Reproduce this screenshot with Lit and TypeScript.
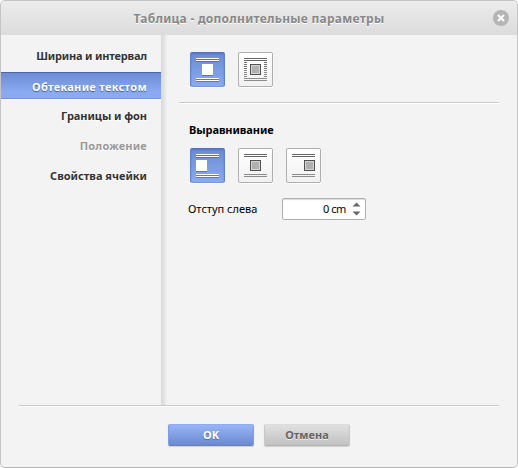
import { LitElement, html, svg, css } from "lit";
import { customElement, property } from "lit/decorators.js";
import { classMap } from "lit/directives/class-map.js";

type Wrap = "left" | "center" | "right" | "around";

@customElement("wrap-button")
class WrapButton extends LitElement {
  @property() kind: Wrap = "center";
  @property({ type: Boolean, reflect: true }) active = false;

  static styles = css`
    :host {
      display: block;
      box-sizing: border-box;
      width: 35px;
      height: 35px;
      border: 1px solid #afafaf;
      border-radius: 2px;
      background: linear-gradient(#fff, #f1f1f1);
      box-shadow: 0 1px 0 #fff;
    }
    :host([active]) {
      border-color: #5472b6 #6482cb #7896e0;
      background: linear-gradient(#6c8bd2, #8aabf1);
      box-shadow: inset 0 1px 2px rgba(50, 75, 140, 0.35), 0 1px 0 #fff;
    }
    svg {
      display: block;
      margin: -1px;
    }
    :host([active]) svg {
      filter: drop-shadow(0 1px 0.5px rgba(50, 75, 140, 0.5));
    }
  `;

  render() {
    const x = this.kind === "left" ? 6 : this.kind === "right" ? 18 : 12;
    const top = this.active ? "#fff" : "#666";
    const low = this.active ? "#fff" : "#8c8c8c";
    return html`<svg width="35" height="35" viewBox="0 0 35 35" shape-rendering="crispEdges">
      <path d="M6 6.5h23M6 8.5h23" stroke=${top} />
      <path d="M6 26.5h23M6 28.5h23" stroke=${low} />
      ${this.kind === "around"
        ? [10, 12, 14, 16, 18, 20, 22, 24].map(
            (y) => svg`<path d="M6 ${y + 0.5}h3M26 ${y + 0.5}h3" stroke=${y < 18 ? "#707070" : "#888"} />`
          )
        : ""}
      ${this.active
        ? svg`<rect x=${x} y="12" width="11" height="11" fill="#fff" />`
        : svg`<rect x=${x} y="12" width="11" height="11" fill="#505050" />
            <rect x=${x + 1} y="13" width="9" height="9" fill="#d4d4d4" />
            <rect x=${x + 2} y="14" width="7" height="7" fill="#b0b0b0" />`}
    </svg>`;
  }
}

const TABS = [
  { label: "Ширина и интервал", cls: "t1" },
  { label: "Обтекание текстом", cls: "t2", active: true },
  { label: "Границы и фон", cls: "t3" },
  { label: "Положение", cls: "t4", disabled: true },
  { label: "Свойства ячейки", cls: "t5" },
];

@customElement("app-root")
class AppRoot extends LitElement {
  static styles = css`
    :host {
      display: block;
      width: 518px;
      height: 468px;
      background: #fff;
      font: 11px/14px "Noto Sans", sans-serif;
      color: #000;
    }
    .dialog {
      box-sizing: border-box;
      height: 468px;
      display: flex;
      flex-direction: column;
      border: 1px solid #c4c4c4;
      border-bottom-color: #b5b5b5;
      border-radius: 5px;
      background: #f3f3f3;
      overflow: hidden;
    }
    header {
      position: relative;
      height: 34px;
      flex: none;
      display: flex;
      justify-content: center;
      background: linear-gradient(#ececec, #dbdbdb);
      font-weight: 700;
      font-size: 12px;
      line-height: 36px;
      letter-spacing: 0.27px;
      color: #888;
      text-shadow: 0 1px 0 #fff;
      white-space: nowrap;
    }
    .close {
      position: absolute;
      right: 8px;
      top: 9px;
    }
    .body {
      display: flex;
      height: 370px;
      flex: none;
    }
    nav {
      width: 160px;
      padding-top: 7px;
      flex: none;
    }
    .tab {
      box-sizing: border-box;
      height: 27px;
      margin-bottom: 3px;
      padding-right: 14px;
      border: solid transparent;
      border-width: 1px 0;
      line-height: 28px;
      text-align: right;
      font-weight: 700;
      color: #333;
      white-space: nowrap;
      text-shadow: 0 1px 0 #fff;
    }
    .t1 {
      line-height: 25px;
      letter-spacing: -0.18px;
    }
    .t2 {
      margin-bottom: 2px;
      letter-spacing: 0.3px;
    }
    .t3 {
      letter-spacing: -0.06px;
    }
    .t4 {
      letter-spacing: 0.2px;
    }
    .active {
      color: #fff;
      background: linear-gradient(#6c8bd2, #8aabf1 75%);
      border-color: #4b66a8 transparent #7390d5;
      text-shadow: 0 1px 1px #3f5a9c;
      box-shadow: 0 1px 0 #fff;
    }
    .disabled {
      color: #999;
    }
    .rail {
      width: 6px;
      flex: none;
      background: linear-gradient(90deg, #d9d9d9, #e0e0e0 40%, #f1f1f1);
    }
    main {
      flex: 1;
      padding: 17px 18px 0 12px;
    }
    .row {
      display: flex;
      gap: 13px;
      padding-left: 11px;
    }
    hr {
      height: 1px;
      margin: 0;
      border: 0;
      background: #cbcbcb;
      box-shadow: 0 1px 0 #fff;
      flex: none;
    }
    .split {
      margin-top: 15px;
    }
    h2 {
      margin: 20px 0 11px 10px;
      font: 700 11px/14px "Noto Sans", sans-serif;
      letter-spacing: -0.08px;
    }
    .field {
      display: flex;
      align-items: center;
      margin-top: 15px;
      padding-left: 9px;
    }
    .label {
      width: 94px;
      white-space: nowrap;
    }
    .spin {
      box-sizing: border-box;
      width: 84px;
      height: 22px;
      display: flex;
      align-items: center;
      justify-content: flex-end;
      gap: 6px;
      padding-right: 4px;
      border: 1px solid #afafaf;
      border-radius: 2px;
      background: #fff;
      box-shadow: inset 0 1px 1px #ddd;
    }
    .value {
      letter-spacing: -0.4px;
    }
    .foot {
      margin: 0 18px;
    }
    footer {
      display: flex;
      justify-content: center;
      gap: 10px;
      padding-top: 18px;
    }
    .btn {
      box-sizing: border-box;
      width: 86px;
      height: 22px;
      border-radius: 2px;
      border: 1px solid;
      text-align: center;
      line-height: 20px;
      font-weight: 700;
      box-shadow: 0 1px 1px rgba(0, 0, 0, 0.15);
    }
    .ok {
      color: #fff;
      border-color: #90adf0 #7c9be2 #6381c8;
      background: linear-gradient(#98b5f6, #6a89d1);
      text-shadow: 0 1px 1px #4c67a9;
    }
    .cancel {
      color: #666;
      border-color: #dcdcdc #c8c8c8 #b4b4b4;
      background: linear-gradient(#e0e0e0, #c2c2c2);
      text-shadow: 0 1px 0 #eee;
    }
  `;

  render() {
    return html`<div class="dialog">
      <header>
        <span class="title">Таблица - дополнительные параметры</span>
        <svg class="close" width="16" height="16" viewBox="0 0 16 16">
          <circle cx="8" cy="8" r="8" fill="#b5b5b5" />
          <path d="M5 5l6 6M11 5l-6 6" stroke="#fff" stroke-width="2" />
        </svg>
      </header>
      <div class="body">
        <nav>
          ${TABS.map(
            (t) => html`<div
              class=${classMap({ tab: true, [t.cls]: true, active: !!t.active, disabled: !!t.disabled })}
            ><span>${t.label}</span></div>`
          )}
        </nav>
        <div class="rail"></div>
        <main>
          <div class="row">
            <wrap-button kind="center" active></wrap-button>
            <wrap-button kind="around"></wrap-button>
          </div>
          <hr class="split" />
          <h2><span>Выравнивание</span></h2>
          <div class="row">
            <wrap-button kind="left" active></wrap-button>
            <wrap-button kind="center"></wrap-button>
            <wrap-button kind="right"></wrap-button>
          </div>
          <div class="field">
            <div class="label"><span>Отступ слева</span></div>
            <div class="spin">
              <span class="value">0 cm</span>
              <svg width="9" height="14" viewBox="0 0 9 14">
                <path d="M0.5 4.5L4.5 0.5L8.5 4.5zM0.5 9.5L4.5 13.5L8.5 9.5z" fill="#666" />
              </svg>
            </div>
          </div>
        </main>
      </div>
      <hr class="foot" />
      <footer>
        <div class="btn ok">OK</div>
        <div class="btn cancel">Отмена</div>
      </footer>
    </div>`;
  }
}
